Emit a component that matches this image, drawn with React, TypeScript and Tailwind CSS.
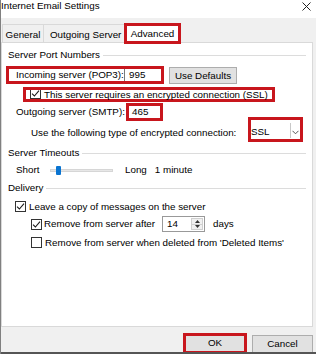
import React from "react";

function Check({ checked }: { checked?: boolean }) {
  return (
    <span className="w-[11px] h-[11px] border border-[#333333] bg-white flex items-center justify-center shrink-0">
      {checked && (
        <svg width="9" height="9" viewBox="0 0 9 9">
          <path d="M1 4.6 L3.4 7 L8 1.6" fill="none" stroke="#1a1a1a" strokeWidth="1.1" />
        </svg>
      )}
    </span>
  );
}

function GroupHeader({ label }: { label: string }) {
  return (
    <div className="flex items-center h-[10px] gap-[3px]">
      <span className="leading-[10px] whitespace-nowrap">{label}</span>
      <div className="flex-1 h-px bg-[#dcdcdc]" />
    </div>
  );
}

export default function App() {
  return (
    <div className="w-[316px] h-[354px] overflow-hidden flex flex-col bg-[#f0f0f0] border-l border-[#808080] text-black text-[9.8px] font-['Liberation_Sans',Arial,sans-serif]">
      {/* Title bar */}
      <div className="h-[18px] bg-white flex justify-between items-start shrink-0">
        <span className="leading-[12px] whitespace-nowrap">Internet Email Settings</span>
        <svg width="9" height="9" viewBox="0 0 9 9" className="mt-[1.5px] mr-[5px]">
          <path d="M0.5 0.5 L8.5 8.5 M8.5 0.5 L0.5 8.5" stroke="#222" strokeWidth="1" />
        </svg>
      </div>

      {/* Tabs */}
      <div className="h-[24px] flex items-end pl-[1px] shrink-0">
        <div className="w-[41px] h-[18px] border-t border-l border-[#d9d9d9] flex items-center justify-center pt-[2px] leading-[12px]">
          General
        </div>
        <div className="w-[81px] h-[18px] border-t border-l border-[#d9d9d9] flex items-center pl-[6px] pt-[2px] leading-[12px] whitespace-nowrap">
          Outgoing Server
        </div>
        <div className="relative z-10 w-[57px] h-[21px] mb-[-2px] bg-white border-[3px] border-[#c8161d] flex items-center justify-center leading-[12px]">
          Advanced
        </div>
      </div>

      {/* Panel */}
      <div className="w-[312px] h-[285px] shrink-0 bg-white border border-[#d9d9d9] px-[6px] flex flex-col">
        <div className="mt-[7px]">
          <GroupHeader label="Server Port Numbers" />
        </div>

        {/* Incoming */}
        <div className="mt-[6px] h-[18px] flex items-start">
          <div className="ml-[-2px] w-[158px] h-[18px] border-[3px] border-[#c8161d] flex items-center pl-[7px] pr-[1px]">
            <span className="w-[108px] leading-[12px] whitespace-nowrap">Incoming server (POP3):</span>
            <div className="w-[35px] h-[12px] border-l border-[#7a7a7a] bg-white flex items-center pl-[4px] leading-[12px]">
              995
            </div>
          </div>
          <div className="ml-[5px] mt-[1px] w-[68px] h-[17px] bg-[#e1e1e1] border border-[#adadad] flex items-center justify-center leading-[12px]">
            Use Defaults
          </div>
        </div>

        {/* SSL checkbox */}
        <div className="mt-[3px] h-[15px] flex">
          <div className="ml-[15px] w-[252px] h-[15px] border-[3px] border-[#c8161d] flex items-center pl-[4px]">
            <span className="w-[11px] h-[9px] border-x border-b border-[#333333] bg-white flex items-end justify-center shrink-0">
              <svg width="9" height="8" viewBox="0 1 9 8">
                <path d="M1 4.6 L3.4 7 L8 1.6" fill="none" stroke="#1a1a1a" strokeWidth="1.1" />
              </svg>
            </span>
            <span className="ml-[3px] leading-[12px] whitespace-nowrap">
              This server requires an encrypted connection (SSL)
            </span>
          </div>
        </div>

        {/* Outgoing */}
        <div className="mt-[1px] h-[18px] flex items-center">
          <span className="ml-[8px] w-[110px] leading-[12px] whitespace-nowrap">Outgoing server (SMTP):</span>
          <div className="w-[37px] h-[18px] border-[3px] border-[#c8161d] bg-white flex items-center pl-[3px] leading-[12px]">
            465
          </div>
        </div>

        {/* Encryption type */}
        <div className="mt-[-4px] h-[25px] flex items-start">
          <span className="ml-[23px] mt-[10px] w-[217px] leading-[12px] whitespace-nowrap">
            Use the following type of encrypted connection:
          </span>
          <div className="w-[55px] h-[25px] border-[3px] border-[#c8161d] bg-white flex items-stretch">
            <div className="flex-1 flex items-center pt-[4px] leading-[12px]">SSL</div>
            <div className="w-[10px] mt-[3px] mb-[1px] border-l border-[#c8c8c8] flex items-center justify-center pt-[3px]">
              <svg width="7" height="5" viewBox="0 0 7 5">
                <path d="M0.5 0.8 L3.5 3.8 L6.5 0.8" fill="none" stroke="#555" strokeWidth="1" />
              </svg>
            </div>
          </div>
        </div>

        <div className="mt-[6px]">
          <GroupHeader label="Server Timeouts" />
        </div>

        {/* Slider row */}
        <div className="mt-[6px] h-[12px] flex items-center leading-[12px]">
          <span className="ml-[8px] w-[34px]">Short</span>
          <div className="relative w-[63px] h-[3px] bg-[#e7e7e7] border border-[#d6d6d6]">
            <div className="absolute left-[5px] top-[-4px] w-[5px] h-[9px] bg-[#0a74d1] rounded-[1px]" />
          </div>
          <span className="ml-[12px]">Long</span>
          <span className="ml-[8px]">1 minute</span>
        </div>

        <div className="mt-[7px]">
          <GroupHeader label="Delivery" />
        </div>

        {/* Leave copy */}
        <div className="mt-[8px] h-[11px] flex items-center">
          <span className="ml-[7px]">
            <Check checked />
          </span>
          <span className="ml-[3px] leading-[12px] whitespace-nowrap">Leave a copy of messages on the server</span>
        </div>

        {/* Remove after */}
        <div className="mt-[4px] h-[16px] flex items-center">
          <span className="ml-[23px]">
            <Check checked />
          </span>
          <span className="ml-[2px] w-[118px] leading-[12px] whitespace-nowrap">Remove from server after</span>
          <div className="w-[43px] h-[16px] border border-[#999999] bg-white flex">
            <div className="flex-1 flex items-center pl-[4px] leading-[12px]">14</div>
            <div className="w-[12px] my-[1px] mr-[1px] flex flex-col bg-[#f0f0f0] border border-[#cfcfcf]">
              <div className="flex-1 flex items-center justify-center border-b border-[#cfcfcf]">
                <svg width="5" height="3" viewBox="0 0 5 3">
                  <path d="M0 3 L2.5 0 L5 3 Z" fill="#333" />
                </svg>
              </div>
              <div className="flex-1 flex items-center justify-center">
                <svg width="5" height="3" viewBox="0 0 5 3">
                  <path d="M0 0 L2.5 3 L5 0 Z" fill="#333" />
                </svg>
              </div>
            </div>
          </div>
          <span className="ml-[8px] leading-[12px]">days</span>
        </div>

        {/* Remove when deleted */}
        <div className="mt-[5px] h-[11px] flex items-center">
          <span className="ml-[23px]">
            <Check />
          </span>
          <span className="ml-[3px] leading-[12px] whitespace-nowrap">
            Remove from server when deleted from 'Deleted Items'
          </span>
        </div>
      </div>

      {/* Bottom buttons */}
      <div className="h-[25px] shrink-0 flex justify-end items-start pr-[3px] overflow-hidden">
        <div className="mt-[6px] w-[64px] h-[21px] border-[3px] border-[#c8161d] bg-[#e1e1e1] flex items-start justify-center pt-[1px] leading-[12px]">
          OK
        </div>
        <div className="ml-[5px] mt-[8px] w-[61px] h-[19px] bg-[#e1e1e1] border border-[#adadad] flex items-start justify-center pt-[2px] leading-[12px]">
          Cancel
        </div>
      </div>
      <div className="h-[2px] bg-[#555555] shrink-0" />
    </div>
  );
}
